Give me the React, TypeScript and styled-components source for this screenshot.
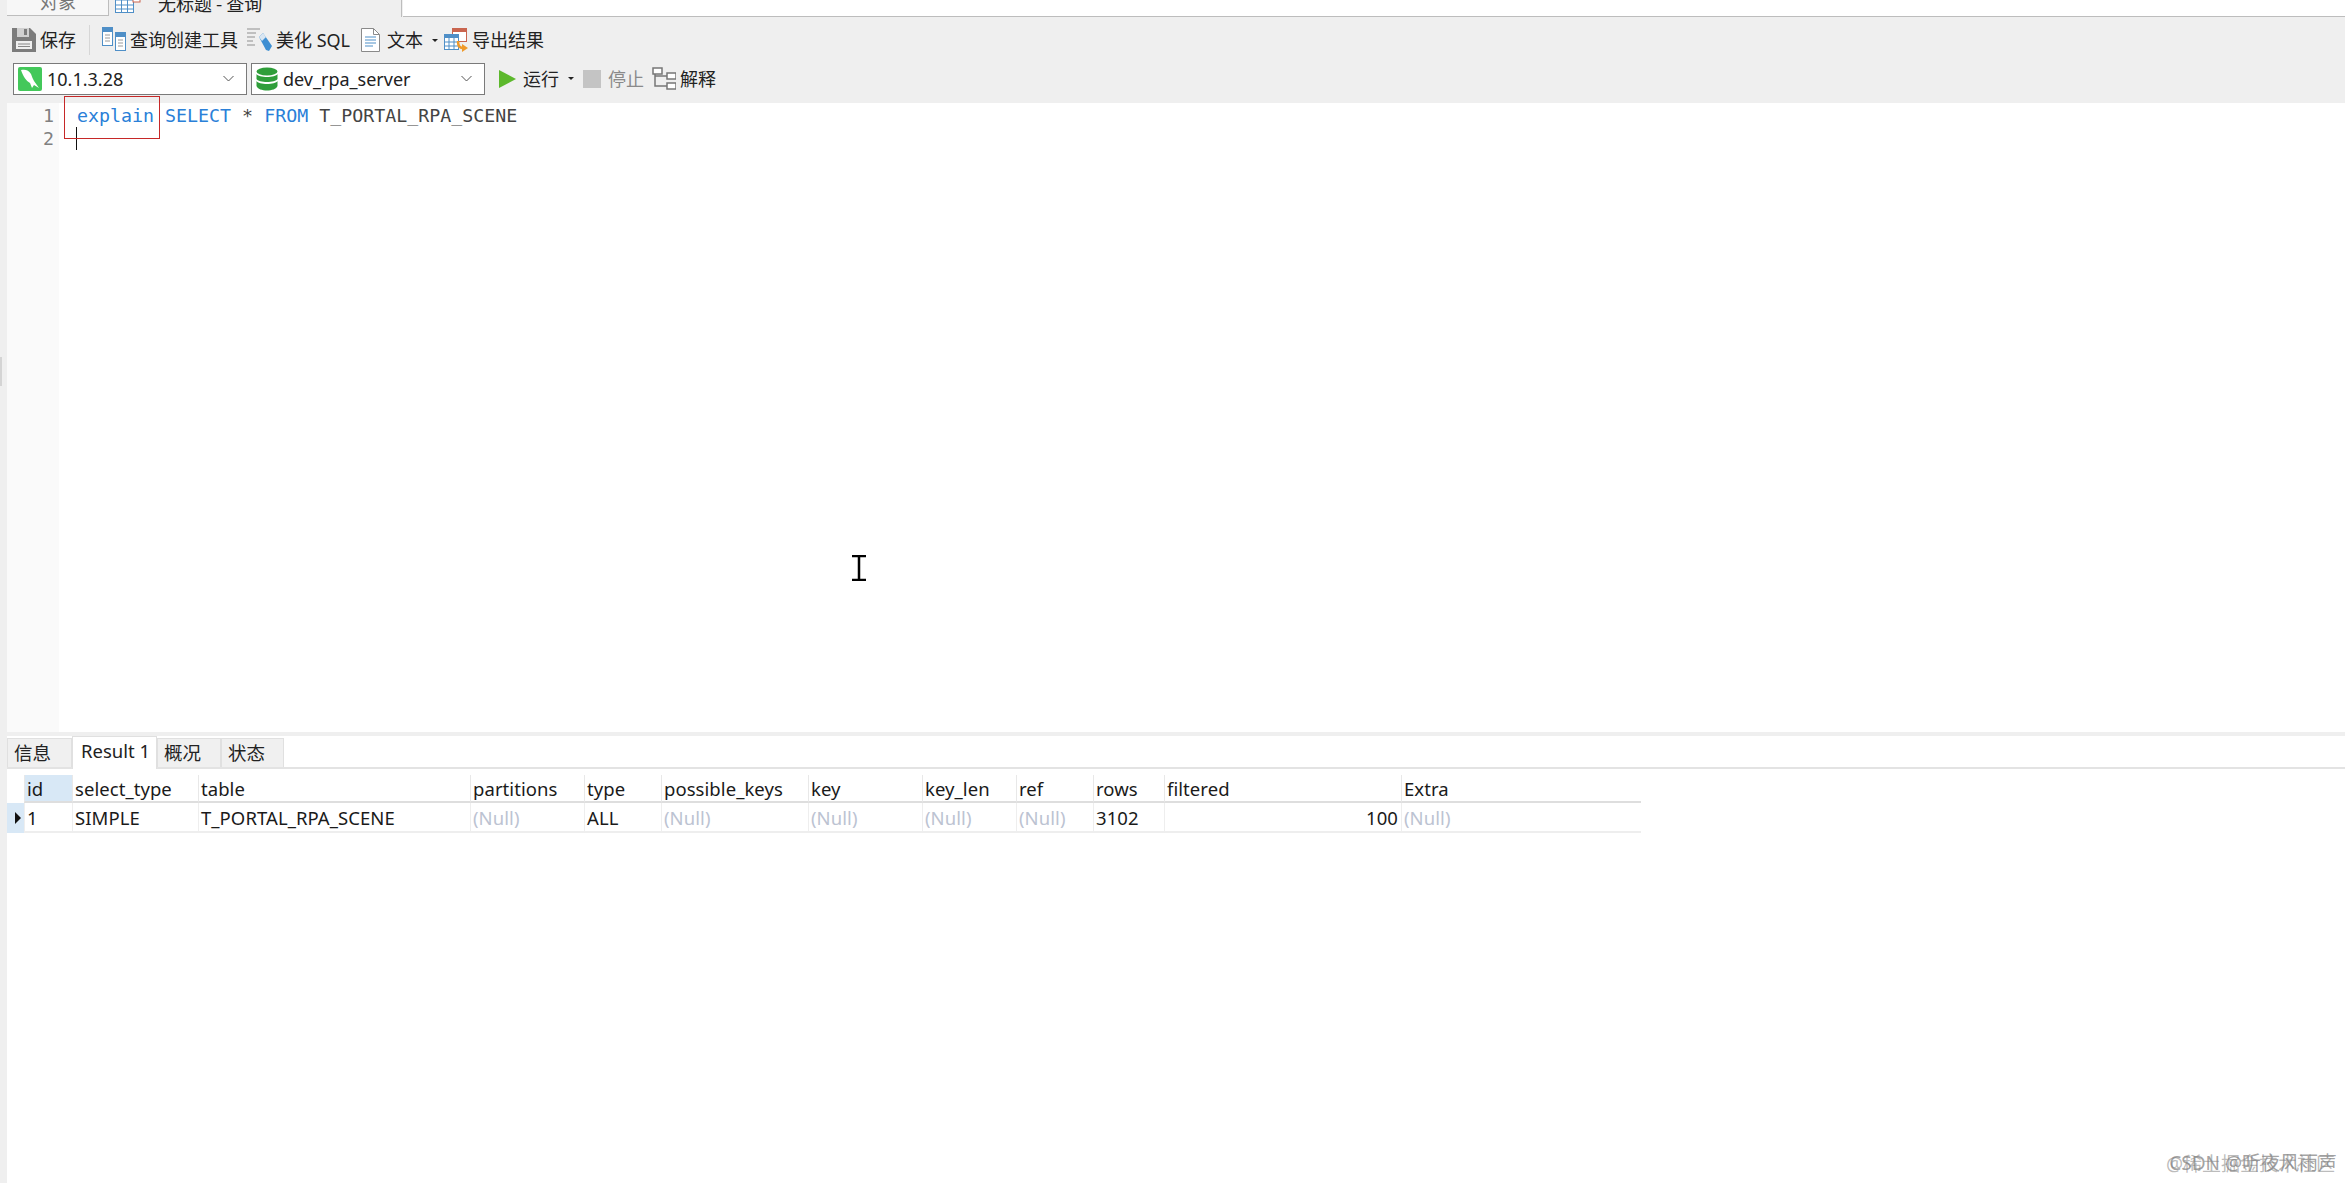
import React from "react";
import styled, { createGlobalStyle } from "styled-components";

const Global = createGlobalStyle`
  html, body { margin: 0; padding: 0; background: #fff; }
  * { box-sizing: border-box; }
`;
const UI = `"Noto Sans", "Noto Sans CJK SC", sans-serif`;
const CJK = `"Noto Sans CJK SC", sans-serif`;

const Page = styled.div`
  position: relative; width: 2345px; height: 1183px; overflow: hidden;
  display: flex; background: #fff; color: #222; font-family: ${UI};
`;
const Rail = styled.div`
  width: 7px; flex: none; background: #efefef; position: relative;
`;
const RailHandle = styled.div`
  position: absolute; left: 0; top: 357px; width: 2px; height: 29px; background: #d4d4d4;
`;
const Main = styled.div`display: flex; flex-direction: column; flex: 1; min-width: 0;`;

const TabStrip = styled.div`display: flex; height: 17px; background: #efefef; flex: none;`;
const DocTab = styled.div<{ $active?: boolean; $w: number; $pad: number }>`
  width: ${p => p.$w}px; padding-left: ${p => p.$pad}px; height: ${p => (p.$active ? 17 : 16)}px;
  display: flex; align-items: flex-end; gap: 17px; overflow: hidden; flex: none;
  background: ${p => (p.$active ? "#efefef" : "#f7f7f7")};
  border-right: 1px solid #bdbdbd;
  border-bottom: ${p => (p.$active ? "none" : "1px solid #bdbdbd")};
  font: 18px/22px ${CJK}; color: ${p => (p.$active ? "#222" : "#777")};
`;
const DocText = styled.span`position: relative; top: -3px; white-space: pre;`;
const DocIconWrap = styled.span`display: block; position: relative; top: -6px; height: 17px;`;
const TabRest = styled.div`flex: 1; background: #fff; border-bottom: 1px solid #bdbdbd; margin-left: 1px;`;

const Toolbar = styled.div<{ $top?: number; $bottom?: number }>`
  height: 43px; background: #efefef; display: flex; align-items: center; flex: none;
  padding-top: ${p => p.$top ?? 0}px; padding-bottom: ${p => p.$bottom ?? 0}px;
`;
const Tool = styled.div<{ $ml: number; $dim?: boolean }>`
  display: flex; align-items: center; gap: 4px; margin-left: ${p => p.$ml}px;
  font: 18px/24px ${UI}; color: ${p => (p.$dim ? "#8a8a8a" : "#222")}; white-space: nowrap;
`;
const ToolLabel = styled.span<{ $ml?: number }>`margin-left: ${p => p.$ml ?? 0}px;`;
const Sep = styled.div`width: 1px; height: 30px; background: #d6d6d6; margin-left: 13px;`;
const Caret = styled.span`
  width: 0; height: 0; border-left: 3px solid transparent; border-right: 3px solid transparent;
  border-top: 3px solid #222; margin-left: 5px;
`;
const Select = styled.div<{ $w: number; $ml: number }>`
  width: ${p => p.$w}px; margin-left: ${p => p.$ml}px; height: 32px; background: #fff;
  border: 1px solid #7a7a7a; display: flex; align-items: center; padding: 0 12px 0 4px; gap: 5px;
  font: 18px/24px ${UI}; color: #222;
`;
const SelectText = styled.span`flex: 1; white-space: nowrap;`;

const Editor = styled.div`position: relative; height: 629px; display: flex; flex: none; background: #fff;`;
const Gutter = styled.div`
  width: 52px; background: #fafafa; flex: none; padding-top: 1px;
  font: 18.3px/23px "DejaVu Sans Mono", monospace; color: #808080; text-align: right; padding-right: 5px;
`;
const Code = styled.div`
  padding: 1px 0 0 18px; font: 18.3px/23px "DejaVu Sans Mono", monospace; color: #444; white-space: pre; position: relative;
`;
const Kw = styled.span`color: #2a80d8;`;
const CodeLine = styled.div`height: 23px;`;
const CursorBar = styled.span`
  position: absolute; left: 17px; top: 24px; width: 1px; height: 23px; background: #111;
`;
const RedBox = styled.div`
  position: absolute; left: 5px; top: -7px; width: 96px; height: 43px; border: 1px solid #c62828;
`;
const Mouse = styled.svg`position: absolute; left: 844px; top: 452px;`;

const ResultBand = styled.div`height: 4px; background: #efefef; flex: none;`;
const ResultTabs = styled.div`
  display: flex; height: 33px; flex: none; align-items: flex-end; border-bottom: 2px solid #e3e3e3;
`;
const RTab = styled.div<{ $w: number; $active?: boolean }>`
  width: ${p => p.$w}px; height: ${p => (p.$active ? 33 : 29)}px; flex: none;
  margin-bottom: ${p => (p.$active ? -2 : 0)}px;
  background: ${p => (p.$active ? "#fff" : "#f0f0f0")};
  border: 1px solid #e0e0e0; border-bottom: none;
  padding-left: ${p => (p.$active ? 8 : 6)}px;
  padding-top: 2px;
  font: 18.5px/24px ${UI}; color: #222; white-space: nowrap;
`;
const Table = styled.div`
  margin-top: 6px; display: grid; width: 1634px;
  grid-template-columns: 17px 48px 126px 272px 114px 77px 147px 114px 94px 77px 71px 237px 240px;
  grid-auto-rows: auto; font: 18.5px/24px ${UI}; color: #1a1a1a; letter-spacing: 0.06px;
`;
const Head = styled.div<{ $sel?: boolean }>`
  height: 28px; padding: 2px 1px 0 2px; background: ${p => (p.$sel ? "#d8e8f6" : "#fff")};
  border-left: 1px solid #e8e8e8; border-bottom: 2px solid #dedede; white-space: nowrap;
`;
const Corner = styled.div`height: 28px; background: #fff;`;
const Cell = styled.div<{ $null?: boolean; $right?: boolean }>`
  height: 30px; padding: 3px 3px 0 2px; border-left: 1px solid #eeeeee; border-bottom: 2px solid #eeeeee;
  color: ${p => (p.$null ? "#bcc3d2" : "#1a1a1a")}; text-align: ${p => (p.$right ? "right" : "left")};
  white-space: nowrap;
`;
const RowMark = styled.div`
  height: 30px; background: #d8e8f6; display: flex; align-items: center; justify-content: flex-end; padding-right: 3px;
`;
const Arrow = styled.span`
  width: 0; height: 0; border-top: 6px solid transparent; border-bottom: 6px solid transparent; border-left: 6px solid #111;
`;
const Watermark = styled.div`
  position: absolute; right: 8px; bottom: 9px; font: 19px/22px ${UI}; color: rgba(110,110,110,.65); white-space: nowrap;
`;
const Watermark2 = styled(Watermark)`right: 10px; bottom: 8px; color: rgba(130,130,130,.55);`;

const TableIcon = () => (
  <svg width="26" height="17" viewBox="0 0 26 17">
    <rect x=".5" y=".5" width="18" height="16" fill="#fff" stroke="#4f8fc7" />
    <rect x=".5" y=".5" width="18" height="4" fill="#4f8fc7" />
    <path d="M6.500 4v12M12.500 4v12M1 9h18M1 13h18" stroke="#4f8fc7" />
    <rect x="18" y="0" width="7" height="6" fill="#fff" stroke="#c9654f" />
  </svg>
);
const SaveIcon = () => (
  <svg width="24" height="24" viewBox="0 0 24 24">
    <path d="M0 0h18l6 6v18H0z" fill="#7c7c7c" />
    <rect x="5" y="0" width="12" height="9" fill="#d0d0d0" />
    <rect x="12" y="1" width="3" height="6" fill="#7c7c7c" />
    <rect x="4" y="13" width="16" height="8" fill="#f0f0f0" />
    <path d="M6 16h12M6 18.500h12" stroke="#888" />
  </svg>
);
const BuilderIcon = () => (
  <svg width="24" height="24" viewBox="0 0 24 24" style={{ marginTop: -2 }}>
    <rect x=".5" y=".5" width="10" height="18" fill="#fff" stroke="#4f8fc7" />
    <rect x="0" y="0" width="11" height="5" fill="#4f8fc7" />
    <rect x="13.500" y="5.500" width="10" height="18" fill="#fff" stroke="#4f8fc7" />
    <rect x="13" y="5" width="11" height="5" fill="#4f8fc7" />
    <path d="M3 8h5M3 11h5M3 14h5M16 13h5M16 16h5M16 19h5" stroke="#9a9a9a" />
  </svg>
);
const BeautifyIcon = () => (
  <svg width="25" height="24" viewBox="0 0 25 24">
    <path d="M0 1h13M0 5h9M0 9h8M0 13h6M0 17h8" stroke="#b0b0b0" strokeWidth="1.500" />
    <path d="M12 9l4-4 9 13-3 5-3-1z" fill="#3f8fd2" />
    <path d="M12 9l4-4 3 4-4 4z" fill="#d9e6f2" />
  </svg>
);
const DocIcon = () => (
  <svg width="19" height="24" viewBox="0 0 19 24">
    <path d="M.5.500h12l6 6v17H.5z" fill="#fff" stroke="#8a8a8a" />
    <path d="M12.500.500v6h6" fill="none" stroke="#8a8a8a" />
    <path d="M4 9h11M4 12h11M4 15h11M4 18h8" stroke="#4f8fc7" />
  </svg>
);
const ExportIcon = () => (
  <svg width="24" height="25" viewBox="0 0 24 25">
    <rect x="8.500" y=".5" width="14" height="13" fill="#fff" stroke="#c9654f" />
    <rect x="8" y="0" width="15" height="4" fill="#c9654f" />
    <rect x=".5" y="6.500" width="14" height="15" fill="#fff" stroke="#4f8fc7" />
    <rect x="0" y="6" width="15" height="4" fill="#4f8fc7" />
    <path d="M5 10v12M10 10v12M1 14h14M1 18h14" stroke="#4f8fc7" />
    <path d="M14 13c0 6 2 7 6 7" fill="none" stroke="#ef9a2b" strokeWidth="2.500" />
    <path d="M18 16l6 4-6 4z" fill="#ef9a2b" />
  </svg>
);
const DolphinIcon = () => (
  <svg width="24" height="24" viewBox="0 0 24 24">
    <rect width="24" height="24" rx="2" fill="#43c85a" />
    <path d="M3 3c4-1 8 0 10 4 1 3 2 5 3 7l5 7-5-3-2 3-2-5C8 14 5 9 3 3z" fill="#fff" />
  </svg>
);
const DbIcon = () => (
  <svg width="22" height="24" viewBox="0 0 22 24">
    <ellipse cx="11" cy="4.500" rx="10.500" ry="4" fill="#2f9e3a" />
    <path d="M.5 7c2 4 19 4 21 0v5c-2 4-19 4-21 0z" fill="#2f9e3a" />
    <path d="M.5 14c2 4 19 4 21 0v5c-2 6-19 6-21 0z" fill="#2f9e3a" />
  </svg>
);
const Chevron = () => (
  <svg width="11" height="7" viewBox="0 0 11 7"><path d="M.5 1l5 5 5-5" fill="none" stroke="#555" /></svg>
);
const PlayIcon = () => (
  <svg width="17" height="18" viewBox="0 0 17 18"><path d="M0 0l17 9L0 18z" fill="#5cb82c" /></svg>
);
const StopIcon = styled.span`width: 18px; height: 18px; background: #c4c4c4; display: block;`;
const ExplainIcon = () => (
  <svg width="24" height="24" viewBox="0 0 24 24">
    <rect x="1" y="1" width="9" height="6" fill="#fff" stroke="#777" strokeWidth="1.500" />
    <rect x="15" y="6" width="9" height="6" fill="#fff" stroke="#777" strokeWidth="1.500" />
    <rect x="15" y="16" width="9" height="6" fill="#fff" stroke="#777" strokeWidth="1.500" />
    <path d="M3 7v12h12M3 9h12" fill="none" stroke="#777" strokeWidth="1.500" />
  </svg>
);

const heads = ["id","select_type","table","partitions","type","possible_keys","key","key_len","ref","rows","filtered","Extra"];
const cells: { t: string; n?: boolean; r?: boolean }[] = [
  { t: "1" }, { t: "SIMPLE" }, { t: "T_PORTAL_RPA_SCENE" }, { t: "(Null)", n: true }, { t: "ALL" },
  { t: "(Null)", n: true }, { t: "(Null)", n: true }, { t: "(Null)", n: true }, { t: "(Null)", n: true },
  { t: "3102" }, { t: "100", r: true }, { t: "(Null)", n: true },
];

export default function App() {
  return (
    <Page>
      <Global />
      <Rail><RailHandle /></Rail>
      <Main>
        <TabStrip>
          <DocTab $w={102} $pad={33}><DocText>对象</DocText></DocTab>
          <DocTab $active $w={293} $pad={6}><DocIconWrap><TableIcon /></DocIconWrap><DocText>无标题 - 查询</DocText></DocTab>
          <TabRest />
        </TabStrip>
        <Toolbar $top={3}>
          <Tool $ml={5}><SaveIcon /><ToolLabel>保存</ToolLabel></Tool>
          <Sep />
          <Tool $ml={12}><BuilderIcon /><ToolLabel>查询创建工具</ToolLabel></Tool>
          <Tool $ml={9}><BeautifyIcon /><ToolLabel>美化 SQL</ToolLabel></Tool>
          <Tool $ml={11}><DocIcon /><ToolLabel $ml={3}>文本</ToolLabel><Caret /></Tool>
          <Tool $ml={6}><ExportIcon /><ToolLabel>导出结果</ToolLabel></Tool>
        </Toolbar>
        <Toolbar $bottom={6}>
          <Select $w={234} $ml={6}><DolphinIcon /><SelectText>10.1.3.28</SelectText><Chevron /></Select>
          <Select $w={234} $ml={4}><DbIcon /><SelectText>dev_rpa_server</SelectText><Chevron /></Select>
          <Tool $ml={14}><PlayIcon /><ToolLabel $ml={3}>运行</ToolLabel><Caret /></Tool>
          <Tool $ml={9} $dim><StopIcon /><ToolLabel $ml={3}>停止</ToolLabel></Tool>
          <Tool $ml={8}><ExplainIcon /><ToolLabel>解释</ToolLabel></Tool>
        </Toolbar>
        <Editor>
          <Gutter><div>1</div><div>2</div></Gutter>
          <Code>
            <CodeLine><Kw>explain SELECT</Kw> * <Kw>FROM</Kw> T_PORTAL_RPA_SCENE</CodeLine>
            <CodeLine />
            <CursorBar />
            <RedBox />
          </Code>
          <Mouse width="16" height="26" viewBox="0 0 16 26">
            <path d="M1 1h14M1 25h14M8 1v24" stroke="#000" strokeWidth="2.500" fill="none" />
          </Mouse>
        </Editor>
        <ResultBand />
        <ResultTabs>
          <RTab $w={65}>信息</RTab>
          <RTab $w={85} $active>Result 1</RTab>
          <RTab $w={64}>概况</RTab>
          <RTab $w={63}>状态</RTab>
        </ResultTabs>
        <Table>
          <Corner />
          {heads.map((h, i) => <Head key={h} $sel={i === 0}>{h}</Head>)}
          <RowMark><Arrow /></RowMark>
          {cells.map((c, i) => <Cell key={i} $null={c.n} $right={c.r}>{c.t}</Cell>)}
        </Table>
      </Main>
      <Watermark>CSDN @听夜风雨声</Watermark>
      <Watermark2>@稀土掘金技术社区</Watermark2>
    </Page>
  );
}
